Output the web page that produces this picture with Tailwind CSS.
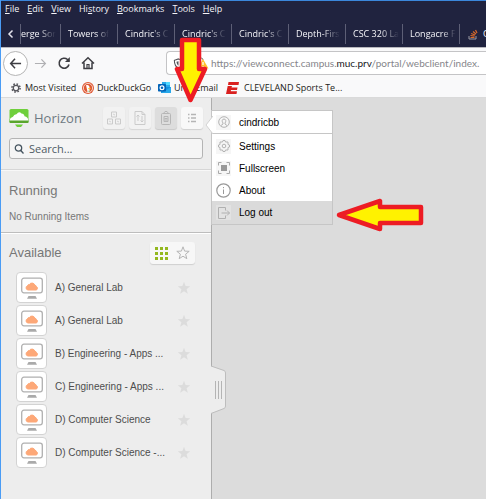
<!DOCTYPE html>
<html lang="en">
<head>
<meta charset="utf-8">
<meta name="viewport" content="width=device-width, initial-scale=1">
<title>Horizon</title>
<script src="https://cdn.jsdelivr.net/npm/@tailwindcss/browser@4"></script>
</head>
<body class="relative flex min-h-screen flex-col overflow-x-hidden border-l border-[#4a9cf5] bg-[#dcdcdc] font-['Open_Sans','Noto_Sans',sans-serif] text-[9px]">

<svg class="hidden" aria-hidden="true">
  <symbol id="desktop" viewBox="0 0 24 26">
    <rect x="1.700" y="3.200" width="20.600" height="14.600" rx="2.200" fill="#fff" stroke="#b0b0b0" stroke-width="1.300"/>
    <path d="M8.500 21h7l1.500 2.700H7z" fill="#aaa"/>
    <path d="M8 15a2.200 2.200 0 0 1-.6-4.200a2 2 0 0 1 2-1.300a3 3 0 0 1 5.400.6a2.600 2.600 0 0 1 1.800 1.600a1.800 1.800 0 0 1-.5 3.300z" fill="#fda878" stroke="#fda878"/>
  </symbol>
  <symbol id="star" viewBox="0 0 14 14">
    <path d="M7 .8l1.600 4.300 4.600.2-3.600 2.900 1.200 4.500L7 10.200l-3.800 2.500 1.200-4.500L.8 5.300l4.600-.2z"/>
  </symbol>
</svg>

<header>
  <div class="border-t border-[#3b87dc] bg-[#20233f] text-[#f4f4f8]">
    <nav class="flex h-4 items-center gap-2 px-1 leading-4" aria-label="Menu bar">
      <button><u>F</u>ile</button><button><u>E</u>dit</button><button><u>V</u>iew</button><button>Hi<u>s</u>tory</button><button><u>B</u>ookmarks</button><button><u>T</u>ools</button><button><u>H</u>elp</button>
    </nav>
    <div class="flex h-[30px] items-center overflow-hidden pt-1" role="tablist">
      <button class="flex h-5 w-5 shrink-0 items-center justify-center border-r border-[#5d5f76]" aria-label="Scroll tabs left"><svg class="size-3" viewBox="0 0 12 12" fill="none" stroke="#e4e4ec" stroke-width="1.500"><path d="M7.500 2.500L4 6l3.500 3.500"/></svg></button>
      <button role="tab" class="h-5 w-10 shrink-0 border-r border-[#5d5f76] text-left whitespace-nowrap"><span class="block w-fit mask-r-from-50%">erge Sor</span></button>
      <button role="tab" class="h-5 w-[57px] shrink-0 border-r border-[#5d5f76] pl-[7px] text-left whitespace-nowrap"><span class="block w-fit mask-r-from-70%">Towers of</span></button>
      <button role="tab" class="h-5 w-[57px] shrink-0 border-r border-[#5d5f76] pl-[7px] text-left whitespace-nowrap"><span class="block w-fit mask-r-from-60%">Cindric's C</span></button>
      <button role="tab" class="h-5 w-[57px] shrink-0 border-r border-[#5d5f76] pl-[7px] text-left whitespace-nowrap"><span class="block w-fit mask-r-from-60%">Cindric's C</span></button>
      <button role="tab" class="h-5 w-[57px] shrink-0 border-r border-[#5d5f76] pl-[7px] text-left whitespace-nowrap"><span class="block w-fit mask-r-from-60%">Cindric's C</span></button>
      <button role="tab" class="h-5 w-[57px] shrink-0 border-r border-[#5d5f76] pl-[7px] text-left whitespace-nowrap"><span class="block w-fit mask-r-from-60%">Depth-Firs</span></button>
      <button role="tab" class="h-5 w-[57px] shrink-0 border-r border-[#5d5f76] pl-[7px] text-left whitespace-nowrap"><span class="block w-fit mask-r-from-60%">CSC 320 La</span></button>
      <button role="tab" class="h-5 w-[57px] shrink-0 border-r border-[#5d5f76] pl-[7px] text-left whitespace-nowrap"><span class="block w-fit mask-r-from-70%">Longacre F</span></button>
      <button role="tab" class="flex h-5 w-[57px] shrink-0 items-center gap-1 pl-2" aria-label="Stack Overflow"><svg class="size-[11px] shrink-0" viewBox="0 0 11 11" fill="none"><path d="M1 7v3h7V7" stroke="#9a9aa4"/><path d="M2.500 8.500h4M2.500 6.500l4 .6M3.200 4.500l4 1.500M5 2.500l3 2.500M7.500 1l1.500 3" stroke="#d9692a" stroke-width="1.200"/></svg>C</button>
    </div>
  </div>

  <div class="flex h-[31px] items-center border-t border-[#b8b8be] bg-[#f9f9fa] pl-0.5 text-[#3d3d42]">
    <button class="flex size-[25px] shrink-0 items-center justify-center rounded-full border border-[#b5b5b5] bg-white" aria-label="Back"><svg class="size-[13px]" viewBox="0 0 14 14" fill="none" stroke="currentColor" stroke-width="1.600"><path d="M13 7H2M6.500 2L1.800 7l4.700 5"/></svg></button>
    <button class="ml-[6px]" aria-label="Forward"><svg class="size-[13px]" viewBox="0 0 14 14" fill="none" stroke="#b0b0b3" stroke-width="1.300"><path d="M1 7h11M8 2.500L12.300 7 8 11.500"/></svg></button>
    <button class="ml-[10px]" aria-label="Reload"><svg class="size-[14px]" viewBox="0 0 14 14" fill="none" stroke="currentColor" stroke-width="1.600"><path d="M12 8.500A5 5 0 1 1 10.500 3.500L12 5"/><path d="M12.800 1v5H8z" fill="currentColor" stroke="none"/></svg></button>
    <button class="ml-[10px]" aria-label="Home"><svg class="size-[14px]" viewBox="0 0 14 14" fill="none" stroke="currentColor" stroke-width="1.500"><path d="M1 7.500L7 1.800l6 5.700M3 6.500v6h8v-6"/><path d="M6 12.500V8.500h2v4" stroke-width="1.200"/></svg></button>
    <div class="ml-[71px] flex h-6 min-w-0 flex-1 items-center overflow-hidden rounded-l-sm border border-r-0 border-[#c4c4c6] bg-white pl-[6px]">
      <svg class="size-[11px] shrink-0" viewBox="0 0 11 12" fill="none" stroke="#55555b" stroke-width="1.200"><path d="M5.500 1l4.500 1.500c0 4-1 7-4.500 8.700C2 9.500 1 6.500 1 2.500z"/><path d="M5.500 3.500v5c-1.500-1-2-2.500-2.200-4.300z" fill="#55555b" stroke="none"/></svg>
      <svg class="ml-[13px] size-[12px] shrink-0" viewBox="0 0 12 12"><path d="M2 5.500V3a2 2 0 0 1 4 0" stroke="#777" fill="none"/><path d="M6 2l5.500 9.500H.5z" fill="#ffbf2c"/><path d="M6 5v3M6 9v1" stroke="#fff" stroke-width="1.200"/></svg>
      <div role="textbox" contenteditable="true" aria-label="Address" class="ml-[2px] font-['Lato','Open_Sans',sans-serif] text-[10px] whitespace-nowrap text-[#85858a]">https://viewconnect.campus.<span class="text-[#18181c]">muc.prv</span>/portal/webclient/index.</div>
    </div>
  </div>

  <nav class="flex h-5 items-center border-b border-[#dadada] bg-[#f9f9fa] pl-[10px] whitespace-nowrap text-[#1c1c20]" aria-label="Bookmarks">
    <a href="#" class="flex w-[71px] items-center gap-1"><svg class="size-[10px] shrink-0" viewBox="0 0 12 12" fill="none" stroke="#55555b"><circle cx="6" cy="6" r="3.300" stroke-width="1.500"/><circle cx="6" cy="6" r="4.900" stroke-width="1.800" stroke-dasharray="1.900 1.950"/></svg>Most Visited</a>
    <a href="#" class="flex w-[76px] items-center gap-[3px]"><svg class="size-3 shrink-0" viewBox="0 0 12 12"><circle cx="6" cy="6" r="6" fill="#de5833"/><circle cx="6" cy="6" r="4.600" fill="none" stroke="#fff" stroke-width=".7"/><path d="M4 3.300c2-.9 3.500.2 3.500 2.200v4.800l-1.800.3z" fill="#fff"/><path d="M6 6.300l2.500-.5v1.200l-2 .3z" fill="#fdc328"/><path d="M6.500 8.600l1.500.9-1.300.6z" fill="#4cae4c"/></svg>DuckDuckGo</a>
    <a href="#" class="flex w-[68px] items-center gap-[3px]"><svg class="size-[13px] shrink-0" viewBox="0 0 13 13"><path d="M4 1h8v5H4z" fill="#28a8ea"/><path d="M8 1h4v3H8z" fill="#50d9ff"/><path d="M3 6h10v6H3z" fill="#1490df"/><path d="M3 12l10-6v6z" fill="#28a8ea"/><rect y="3" width="8" height="7.500" rx=".7" fill="#0364b8"/><circle cx="4" cy="6.700" r="1.900" fill="none" stroke="#fff" stroke-width="1.200"/></svg>Univ Email</a>
    <a href="#" class="flex items-center gap-[5px]"><svg class="h-3 w-[13px] shrink-0" viewBox="0 0 13 12" fill="#d9201f"><path d="M2.500 0H13l-.5 3H2z"/><path d="M1.700 4H6l-.5 1.500h6L11 8H5l-.3 1.300H11L10.500 12H0z"/></svg>CLEVELAND Sports Te...</a>
  </nav>
</header>

<main class="flex flex-1 items-stretch font-['Liberation_Sans',Arial,sans-serif] text-[10px]">
  <aside class="relative w-[211px] shrink-0 border-r border-[#adadad] bg-[#ededed] text-[#555]">
    <section class="border-b border-[#d6d6d6] px-2 pt-2 pb-[10px]">
      <div class="flex h-6 items-center">
        <svg class="h-5 w-5 shrink-0" viewBox="0 0 20 20"><rect x=".5" y="1" width="19" height="14" rx="1.500" fill="#6fcf3c"/><path d="M.5 11.500h19V14a1 1 0 0 1-1 1h-17a1 1 0 0 1-1-1z" fill="#59a52d"/><path d="M.5 12.500Q1 9.500 4 8.800Q5 6 7.500 6.200Q10 2.500 12.500 5.500Q15 5.500 15.500 8.300Q19 9 19.500 12.500z" fill="#fff"/><path d="M6 16.500h8l-2 2.500H8z" fill="#6fcf3c"/></svg>
        <h1 class="ml-[5px] font-['Open_Sans','Noto_Sans',sans-serif] text-[13px] leading-5 text-[#6d7982]">Horizon</h1>
        <div class="ml-auto flex gap-1">
          <button class="flex h-[22px] w-[22px] items-center justify-center rounded-[3px] bg-[#f2f2f2] shadow-[0_1px_1px_#d5d5d5]" aria-label="USB devices"><svg class="size-[14px]" viewBox="0 0 14 14" fill="none" stroke="#cbcbcb"><path d="M4.500 1h5v5h-5zM.5 8h5v5h-5zM8.500 8h5v5h-5z"/><path d="M6 3l2 1M2 10l2 1M10 10l2 1" stroke-width=".8"/></svg></button>
          <button class="flex h-[22px] w-[22px] items-center justify-center rounded-[3px] bg-[#f2f2f2] shadow-[0_1px_1px_#d5d5d5]" aria-label="Transfer files"><svg class="size-[14px]" viewBox="0 0 14 14" fill="none" stroke="#cbcbcb"><path d="M2 .5h7l3 3v10H2zM9 .5v3h3"/><path d="M5 10V4M3.500 5.500L5 4l1.500 1.500M9 5v6M7.500 9.500L9 11l1.500-1.500"/></svg></button>
          <button class="flex h-[22px] w-[22px] items-center justify-center rounded-[3px] bg-[#dddddd] shadow-[0_1px_1px_#c8c8c8]" aria-label="Clipboard"><svg class="size-[14px]" viewBox="0 0 14 14" fill="none" stroke="#b6b6b6"><rect x="2.500" y="2.500" width="9" height="11" rx="1"/><path d="M4.500 2.500L6 .5h2l1.500 2zM5 5.500h4v5H5z"/><path d="M5.500 7.500h3M5.500 9h3"/></svg></button>
          <button class="flex h-[22px] w-[22px] items-center justify-center rounded-[3px] bg-[#f8f8f8] shadow-[0_1px_1px_#cfcfcf]" aria-label="Options menu"><svg class="h-[10px] w-[10px]" viewBox="0 0 10 10" stroke="#b5b5b5" stroke-width="1.300"><path d="M1 1.500h1.500M4 1.500h5M1 5h1.500M4 5h5M1 8.500h1.500M4 8.500h5"/></svg></button>
        </div>
      </div>
      <label class="mt-[8px] flex h-[21px] items-center rounded-[3px] border border-[#b4b4b4] bg-[#f5f5f5] pl-1">
        <svg class="size-[10px] shrink-0" viewBox="0 0 10 10" fill="none" stroke="#465560" stroke-width="1.300"><circle cx="4.500" cy="4" r="3.200"/><path d="M6.800 6.500L9.500 9.500"/></svg>
        <input type="search" aria-label="Search" placeholder="Search..." class="ml-[5px] min-w-0 flex-1 bg-transparent font-['Open_Sans','Noto_Sans',sans-serif] text-[11px] leading-4 outline-none placeholder:text-[#4e5b64]">
      </label>
    </section>

    <section class="border-t border-b border-t-[#f8f8f8] border-b-[#bdbdbd] px-2 pt-[10px] pb-2">
      <h2 class="text-[13px] leading-5 text-[#777]">Running</h2>
      <p class="mt-[9px] leading-[14px] text-[#777]">No Running Items</p>
    </section>

    <section class="border-t border-white pl-2">
      <div class="flex h-[38px] items-center justify-between pr-4">
        <h2 class="text-[13px] leading-5 text-[#777]">Available</h2>
        <div class="flex h-[22px] items-center gap-2 rounded-[3px] bg-[#f7f7f7] px-[5px] shadow-[0_1px_1px_#cfcfcf]">
          <button aria-label="Show all"><svg class="block size-[13px]" viewBox="0 0 13 13" fill="#93b81f"><path d="M0 0h3v3H0zM5 0h3v3H5zM10 0h3v3h-3zM0 5h3v3H0zM5 5h3v3H5zM10 5h3v3h-3zM0 10h3v3H0zM5 10h3v3H5zM10 10h3v3h-3z"/></svg></button>
          <button aria-label="Show favorites"><svg class="block size-[14px] fill-none stroke-[#b5b5b5]"><use href="#star"/></svg></button>
        </div>
      </div>
      <ul class="flex flex-col gap-[2px] pl-[7px] text-[#4d4d4d]">
        <li class="flex h-[31px] items-center"><span class="flex size-[31px] items-center justify-center rounded-[4px] border border-[#d3d3d3] bg-white"><svg class="h-[26px] w-6"><use href="#desktop"/></svg></span><a href="#" class="ml-2 w-[122px]">A) General Lab</a><button aria-label="Favorite"><svg class="block size-[14px] fill-[#dcdcdc]"><use href="#star"/></svg></button></li>
        <li class="flex h-[31px] items-center"><span class="flex size-[31px] items-center justify-center rounded-[4px] border border-[#d3d3d3] bg-white"><svg class="h-[26px] w-6"><use href="#desktop"/></svg></span><a href="#" class="ml-2 w-[122px]">A) General Lab</a><button aria-label="Favorite"><svg class="block size-[14px] fill-[#dcdcdc]"><use href="#star"/></svg></button></li>
        <li class="flex h-[31px] items-center"><span class="flex size-[31px] items-center justify-center rounded-[4px] border border-[#d3d3d3] bg-white"><svg class="h-[26px] w-6"><use href="#desktop"/></svg></span><a href="#" class="ml-2 w-[122px]">B) Engineering - Apps ...</a><button aria-label="Favorite"><svg class="block size-[14px] fill-[#dcdcdc]"><use href="#star"/></svg></button></li>
        <li class="flex h-[31px] items-center"><span class="flex size-[31px] items-center justify-center rounded-[4px] border border-[#d3d3d3] bg-white"><svg class="h-[26px] w-6"><use href="#desktop"/></svg></span><a href="#" class="ml-2 w-[122px]">C) Engineering - Apps ...</a><button aria-label="Favorite"><svg class="block size-[14px] fill-[#dcdcdc]"><use href="#star"/></svg></button></li>
        <li class="flex h-[31px] items-center"><span class="flex size-[31px] items-center justify-center rounded-[4px] border border-[#d3d3d3] bg-white"><svg class="h-[26px] w-6"><use href="#desktop"/></svg></span><a href="#" class="ml-2 w-[122px]">D) Computer Science</a><button aria-label="Favorite"><svg class="block size-[14px] fill-[#dcdcdc]"><use href="#star"/></svg></button></li>
        <li class="flex h-[31px] items-center"><span class="flex size-[31px] items-center justify-center rounded-[4px] border border-[#d3d3d3] bg-white"><svg class="h-[26px] w-6"><use href="#desktop"/></svg></span><a href="#" class="ml-2 w-[122px]">D) Computer Science -...</a><button aria-label="Favorite"><svg class="block size-[14px] fill-[#dcdcdc]"><use href="#star"/></svg></button></li>
      </ul>
    </section>

    <button class="absolute top-[267px] left-[209px]" aria-label="Collapse sidebar"><svg class="block h-[50px] w-4" viewBox="0 0 16 50" fill="none"><path d="M1 1L14 5.500Q15.500 6 15.500 8V41Q15.500 43 14 43.500L1 48.500" fill="#ededed" stroke="#bdbdbd"/><path d="M5.500 16v18M8.500 16v18M11.500 16v18" stroke="#b4b4b4"/></svg></button>

    <div class="absolute top-3 left-[210px] w-[122px] border border-[#c6c6c6] bg-white text-black" role="menu">
      <svg class="absolute top-[5px] -left-[7px] h-[18px] w-2" viewBox="0 0 8 18"><path d="M8 0L1 9l7 9" fill="#fff" stroke="#d2d2d2"/></svg>
      <button role="menuitem" class="flex h-[23px] w-full items-center gap-2 border-b border-[#c6c6c6] pl-[4px]"><span class="flex size-[15px] items-center justify-center bg-[#f6f6f6]"><svg class="size-3" viewBox="0 0 12 12" fill="none" stroke="#b3b3b3"><circle cx="6" cy="6" r="5.300"/><path d="M3 9.500l2-1.500V7C3.700 5.500 4 3 6 3s2.300 2.500 1 4v1l2 1.500"/></svg></span>cindricbb</button>
      <button role="menuitem" class="mt-px flex h-[22px] w-full items-center gap-2 pl-[4px]"><span class="flex size-[15px] items-center justify-center bg-[#f6f6f6]"><svg class="size-3" viewBox="0 0 12 12" fill="none" stroke="#b3b3b3"><path d="M4.500 2L5 .5h2L7.500 2h2.500v2.500l1.500.5v2l-1.500.5V10H7.500L7 11.500H5L4.500 10H2V7.500L.5 7V5L2 4.500V2z"/><circle cx="6" cy="6" r="1.800"/></svg></span>Settings</button>
      <button role="menuitem" class="flex h-[22px] w-full items-center gap-2 pl-[4px]"><span class="flex size-[15px] items-center justify-center bg-[#f6f6f6]"><svg class="size-3" viewBox="0 0 12 12"><path d="M3 3h6v6H3z" fill="#999"/><path d="M.5 3.500v-3h3M8.500.5h3v3M11.500 8.500v3h-3M3.500 11.500h-3v-3" fill="none" stroke="#aaa"/></svg></span>Fullscreen</button>
      <button role="menuitem" class="flex h-[22px] w-full items-center gap-2 pl-[4px]"><svg class="size-[15px]" viewBox="0 0 15 15" fill="none" stroke="#999"><circle cx="7.500" cy="7.500" r="6.700" stroke-width="1.200"/><path d="M7.500 6.500V11M7.500 4v1.200"/></svg>About</button>
      <button role="menuitem" class="flex h-[23px] w-full items-center gap-2 bg-[#dadada] pl-[4px]"><span class="flex size-[15px] items-center justify-center bg-[#e2e2e2]"><svg class="size-3" viewBox="0 0 12 12" fill="none" stroke="#b0b0b0"><path d="M7.500 3.500V.5h-7v11h7v-3M3.500 6h8M9 3.500L11.500 6 9 8.500"/></svg></span>Log out</button>
    </div>
  </aside>
</main>

<svg class="pointer-events-none absolute top-[37px] left-[172px] h-[68px] w-9" viewBox="0 0 36 68" aria-hidden="true"><path d="M9 3h17v29h6L17.500 63 4 32h5z" fill="#fff200" stroke="#ed1c24" stroke-width="4.500" stroke-linejoin="round"/></svg>
<svg class="pointer-events-none absolute top-[196px] left-[334px] h-[38px] w-[90px]" viewBox="0 0 90 38" aria-hidden="true"><path d="M4 19L45 5v6h41v16H45v6z" fill="#fff200" stroke="#ed1c24" stroke-width="4.500" stroke-linejoin="round"/></svg>
</body>
</html>
